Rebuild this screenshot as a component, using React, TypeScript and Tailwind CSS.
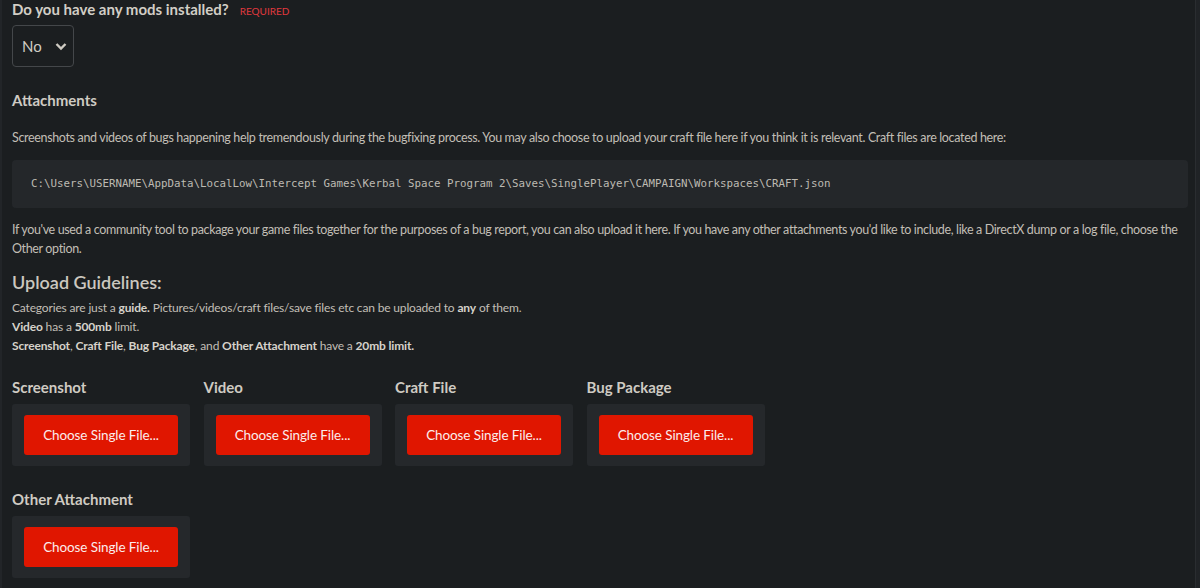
import React from 'react';

const categories = ['Screenshot', 'Video', 'Craft File', 'Bug Package'];

const UploadBox: React.FC<{ label: string }> = ({ label }) => (
  <div>
    <div className="text-[15px] leading-[20px] font-bold text-[#cfcbc3]">{label}</div>
    <div className="mt-[7px] w-[178px] h-[62px] bg-[#25282b] rounded-[3px] px-[12px] py-[11px]">
      <button className="w-[154px] h-[40px] bg-[#e01600] rounded-[3px] text-[13.5px] tracking-[-0.1px] text-[#fbecec]">
        Choose Single File...
      </button>
    </div>
  </div>
);

const App: React.FC = () => {
  return (
    <div className="min-h-screen w-[1200px] bg-[#1b1e20] flex font-['Lato',sans-serif] text-[#c2beb6]">
      <div className="w-[2px] bg-[#222528]"></div>
      <div className="flex-1 pl-[10px] pr-[7px]">
        <div className="flex items-baseline h-[18px] leading-[18px]">
          <span className="text-[15px] font-bold text-[#d2cec6]">Do you have any mods installed?</span>
          <span className="ml-[11px] text-[10px] uppercase text-[#e0393e]">Required</span>
        </div>

        <div className="mt-[7px] w-[62px] h-[42px] border border-[#44474a] rounded-[4px] flex items-center justify-between pl-[9px] pr-[6px] text-[15px] text-[#d0ccc4]">
          <span>No</span>
          <svg width="12" height="9" viewBox="0 0 12 9" fill="none">
            <path d="M1.5 2 L6 6.5 L10.5 2" stroke="#cfcbc3" strokeWidth="2.4" />
          </svg>
        </div>

        <h2 className="mt-[23px] text-[15px] leading-[20px] font-bold text-[#cfcbc3]">Attachments</h2>

        <p className="mt-[18px] text-[12.5px] leading-[19px] tracking-[-0.34px]">
          Screenshots and videos of bugs happening help tremendously during the bugfixing process. You may also choose to upload your craft file here if you think it is relevant. Craft files are located here:
        </p>

        <div className="mt-[13px] h-[48px] bg-[#24272a] rounded-[4px] flex items-center pl-[19px]">
          <code className="font-['DejaVu_Sans_Mono',monospace] text-[10.8px] text-[#bdbab2]">
            C:\Users\USERNAME\AppData\LocalLow\Intercept Games\Kerbal Space Program 2\Saves\SinglePlayer\CAMPAIGN\Workspaces\CRAFT.json
          </code>
        </div>

        <p className="mt-[12px] text-[12.5px] leading-[19px] tracking-[-0.36px]">
          If you've used a community tool to package your game files together for the purposes of a bug report, you can also upload it here. If you have any other attachments you'd like to include, like a DirectX dump or a log file, choose the Other option.
        </p>

        <h2 className="mt-[12px] text-[18px] leading-[24px] font-semibold text-[#cbc7bf]">Upload Guidelines:</h2>
        <div className="mt-[4px] text-[12px] leading-[19px] tracking-[-0.16px]">
          <div>
            Categories are just a <b className="text-[#d6d2ca]">guide.</b> Pictures/videos/craft files/save files etc can be uploaded to <b className="text-[#d6d2ca]">any</b> of them.
          </div>
          <div>
            <b className="text-[#d6d2ca]">Video</b> has a <b className="text-[#d6d2ca]">500mb</b> limit.
          </div>
          <div>
            <b className="text-[#d6d2ca]">Screenshot</b>, <b className="text-[#d6d2ca]">Craft File</b>, <b className="text-[#d6d2ca]">Bug Package</b>, and <b className="text-[#d6d2ca]">Other Attachment</b> have a <b className="text-[#d6d2ca]">20mb limit.</b>
          </div>
        </div>

        <div className="mt-[22px] grid grid-cols-[repeat(4,178px)] gap-x-[13.5px] gap-y-[23px]">
          {categories.map((c) => (
            <UploadBox key={c} label={c} />
          ))}
          <UploadBox label="Other Attachment" />
        </div>
      </div>
      <div className="w-[5px] bg-[#202326] border-l border-[#2a2d30]"></div>
    </div>
  );
};

export default App;
